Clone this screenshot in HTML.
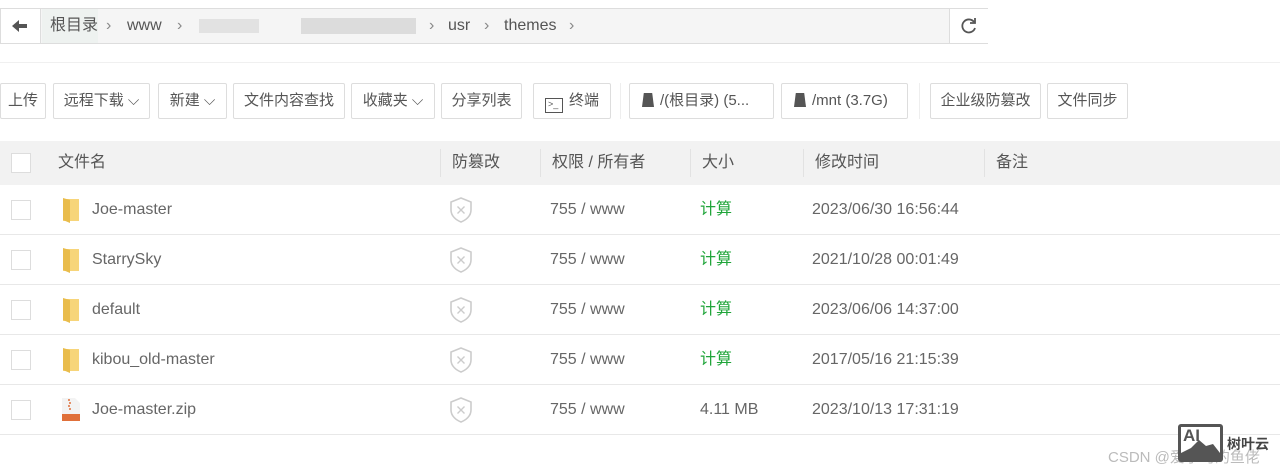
<!DOCTYPE html>
<html><head><meta charset="utf-8"><style>
*{margin:0;padding:0;box-sizing:border-box}
body{width:1280px;height:471px;background:#fff;font-family:"Liberation Sans","Noto Sans CJK SC",sans-serif;color:#555;position:relative;overflow:hidden;font-size:15px}
.abs{position:absolute}
.crumb{left:0;top:8px;width:988px;height:36px;border:1px solid #ddd;background:#f5f5f5}
.crumb span{position:absolute;top:0;line-height:34px;height:34px;font-size:16px;color:#555}
.btn{position:absolute;top:83px;height:36px;border:1px solid #ddd;border-radius:2px;background:#fff;font-size:15px;color:#555;line-height:34px;text-align:center;white-space:nowrap}
.hdr{left:0;top:141px;width:1280px;height:44px;background:#f2f2f2}
.hdr span{position:absolute;top:0;line-height:44px;height:44px;font-size:16px;color:#555}
.vd{position:absolute;top:8px;width:1px;height:28px;background:#e2e2e2}
.row{position:absolute;left:0;width:1280px;height:50px;border-bottom:1px solid #e8e8e8}
.row span{position:absolute;top:0;line-height:50px;height:50px;font-size:16px;color:#666}
.cb{position:absolute;width:20px;height:20px;border:1px solid #ddd;background:#fff;left:11px}
.green{color:#20a53a!important}
</style></head><body>
<div class="abs crumb">
 <div class="abs" style="left:0;top:0;width:40px;height:34px;background:#fff;border-right:1px solid #ddd"></div>
 <svg class="abs" style="left:10px;top:10px" width="18" height="14"><path d="M1 7 L8 1 L8 5 L16 5 L16 9 L8 9 L8 13 Z" fill="#555"/></svg>
 <div class="abs" style="left:41px;top:0;width:56px;height:34px;background:#eef2f0"></div>
 <span style="left:49px">根目录</span><span style="left:105px;color:#888">›</span>
 <span style="left:126px">www</span><span style="left:176px;color:#888">›</span>
 <div class="abs" style="left:198px;top:10px;width:60px;height:14px;background:#e2e2e2"></div>
 <div class="abs" style="left:300px;top:9px;width:115px;height:16px;background:#dcdcdc"></div>
 <span style="left:428px;color:#888">›</span>
 <span style="left:447px">usr</span><span style="left:483px;color:#888">›</span>
 <span style="left:503px">themes</span><span style="left:568px;color:#888">›</span>
 <div class="abs" style="left:948px;top:0;width:39px;height:34px;background:#fff;border-left:1px solid #ddd"></div>
 <svg class="abs" style="left:958px;top:7px" width="20" height="20"><path d="M15 6 A6.5 6.5 0 1 0 16 12" fill="none" stroke="#555" stroke-width="1.8"/><path d="M16 2 L16 7 L11 7" fill="none" stroke="#555" stroke-width="1.8"/></svg>
</div>
<div class="abs" style="left:0;top:62px;width:1280px;height:1px;background:#f0f0f0"></div>
<div class="btn" style="left:0;width:46px">上传</div>
<div class="btn" style="left:53px;width:97px">远程下载 ⌵</div>
<div class="btn" style="left:158px;width:69px">新建 ⌵</div>
<div class="btn" style="left:233px;width:112px">文件内容查找</div>
<div class="btn" style="left:351px;width:84px">收藏夹 ⌵</div>
<div class="btn" style="left:441px;width:81px">分享列表</div>
<div class="btn" style="left:533px;width:78px"><span style="display:inline-block;width:18px;height:15px;border:1.5px solid #555;vertical-align:-2px;margin-right:6px;font-size:9px;line-height:11px;text-align:left;padding-left:2px">&gt;_</span>终端</div>
<div class="abs" style="left:620px;top:83px;width:1px;height:36px;background:#eee"></div>
<div class="btn" style="left:629px;width:145px;text-align:left;padding-left:12px"><span style="display:inline-block;width:12px;height:14px;background:#555;vertical-align:-2px;margin-right:6px;clip-path:polygon(15% 0,85% 0,100% 100%,0 100%)"></span>/(根目录) (5...</div>
<div class="btn" style="left:781px;width:127px;text-align:left;padding-left:12px"><span style="display:inline-block;width:12px;height:14px;background:#555;vertical-align:-2px;margin-right:6px;clip-path:polygon(15% 0,85% 0,100% 100%,0 100%)"></span>/mnt (3.7G)</div>
<div class="abs" style="left:919px;top:83px;width:1px;height:36px;background:#eee"></div>
<div class="btn" style="left:930px;width:111px">企业级防篡改</div>
<div class="btn" style="left:1047px;width:81px">文件同步</div>
<div class="abs hdr">
 <div class="cb" style="top:12px"></div>
 <span style="left:58px">文件名</span>
 <div class="vd" style="left:440px"></div><span style="left:452px">防篡改</span>
 <div class="vd" style="left:540px"></div><span style="left:552px">权限 / 所有者</span>
 <div class="vd" style="left:690px"></div><span style="left:702px">大小</span>
 <div class="vd" style="left:803px"></div><span style="left:815px">修改时间</span>
 <div class="vd" style="left:984px"></div><span style="left:996px">备注</span>
</div>
<svg width="0" height="0" style="position:absolute"><defs>
<symbol id="fd" viewBox="0 0 20 26"><path d="M2 2 L18 2 L18 24 L2 24 Z" fill="#f7d57a"/><path d="M2 1 L9 3 L9 26 L2 23 Z" fill="#e9bc4c"/></symbol>
<symbol id="sh" viewBox="0 0 22 26"><path d="M11 1 L21 5 L21 13 C21 19 16 23 11 25 C6 23 1 19 1 13 L1 5 Z" fill="none" stroke="#ccc" stroke-width="1.6"/><path d="M7.5 9.5 L14.5 16.5 M14.5 9.5 L7.5 16.5" stroke="#ccc" stroke-width="1.4"/></symbol>
</defs></svg>
<div class="row" style="top:185px"><div class="cb" style="top:15px"></div><svg class="abs" style="left:61px;top:12px" width="20" height="26"><use href="#fd"/></svg><span style="left:92px">Joe-master</span><svg class="abs" style="left:450px;top:12px" width="22" height="26"><use href="#sh"/></svg><span style="left:550px">755 / www</span><span class="green" style="left:700px">计算</span><span style="left:812px">2023/06/30 16:56:44</span></div>
<div class="row" style="top:235px"><div class="cb" style="top:15px"></div><svg class="abs" style="left:61px;top:12px" width="20" height="26"><use href="#fd"/></svg><span style="left:92px">StarrySky</span><svg class="abs" style="left:450px;top:12px" width="22" height="26"><use href="#sh"/></svg><span style="left:550px">755 / www</span><span class="green" style="left:700px">计算</span><span style="left:812px">2021/10/28 00:01:49</span></div>
<div class="row" style="top:285px"><div class="cb" style="top:15px"></div><svg class="abs" style="left:61px;top:12px" width="20" height="26"><use href="#fd"/></svg><span style="left:92px">default</span><svg class="abs" style="left:450px;top:12px" width="22" height="26"><use href="#sh"/></svg><span style="left:550px">755 / www</span><span class="green" style="left:700px">计算</span><span style="left:812px">2023/06/06 14:37:00</span></div>
<div class="row" style="top:335px"><div class="cb" style="top:15px"></div><svg class="abs" style="left:61px;top:12px" width="20" height="26"><use href="#fd"/></svg><span style="left:92px">kibou_old-master</span><svg class="abs" style="left:450px;top:12px" width="22" height="26"><use href="#sh"/></svg><span style="left:550px">755 / www</span><span class="green" style="left:700px">计算</span><span style="left:812px">2017/05/16 21:15:39</span></div>
<div class="row" style="top:385px"><div class="cb" style="top:15px"></div>
<svg class="abs" style="left:61px;top:12px" width="20" height="25"><path d="M1 1 L14 1 L19 6 L19 24 L1 24 Z" fill="#f3f3f3"/><path d="M1 17 L19 17 L19 24 L1 24 Z" fill="#e0703a"/><path d="M7 3 h2 M8 6 h2 M7 9 h2 M8 12 h2" stroke="#e0703a" stroke-width="1.5"/></svg>
<span style="left:92px">Joe-master.zip</span><svg class="abs" style="left:450px;top:12px" width="22" height="26"><use href="#sh"/></svg><span style="left:550px">755 / www</span><span style="left:700px">4.11 MB</span><span style="left:812px">2023/10/13 17:31:19</span></div>
<div class="abs" style="left:1108px;top:446px;font-size:15px;color:#bbb">CSDN @爱学习的鱼佬</div>
<div class="abs" style="left:1178px;top:424px;width:45px;height:38px;background:#555;border-radius:3px"><div class="abs" style="left:3px;top:3px;width:39px;height:32px;background:#fff"></div><div class="abs" style="left:5px;top:2px;font:bold 17px 'Liberation Sans';color:#555">AI</div><svg class="abs" style="left:3px;top:14px" width="39" height="21"><path d="M0 21 L0 15 L10 10 L18 2 L25 8 L32 6 L39 15 L39 21 Z" fill="#555"/></svg></div>
<div class="abs" style="left:1227px;top:434px;font-size:14px;font-weight:bold;color:#444">树叶云</div>
</body></html>
